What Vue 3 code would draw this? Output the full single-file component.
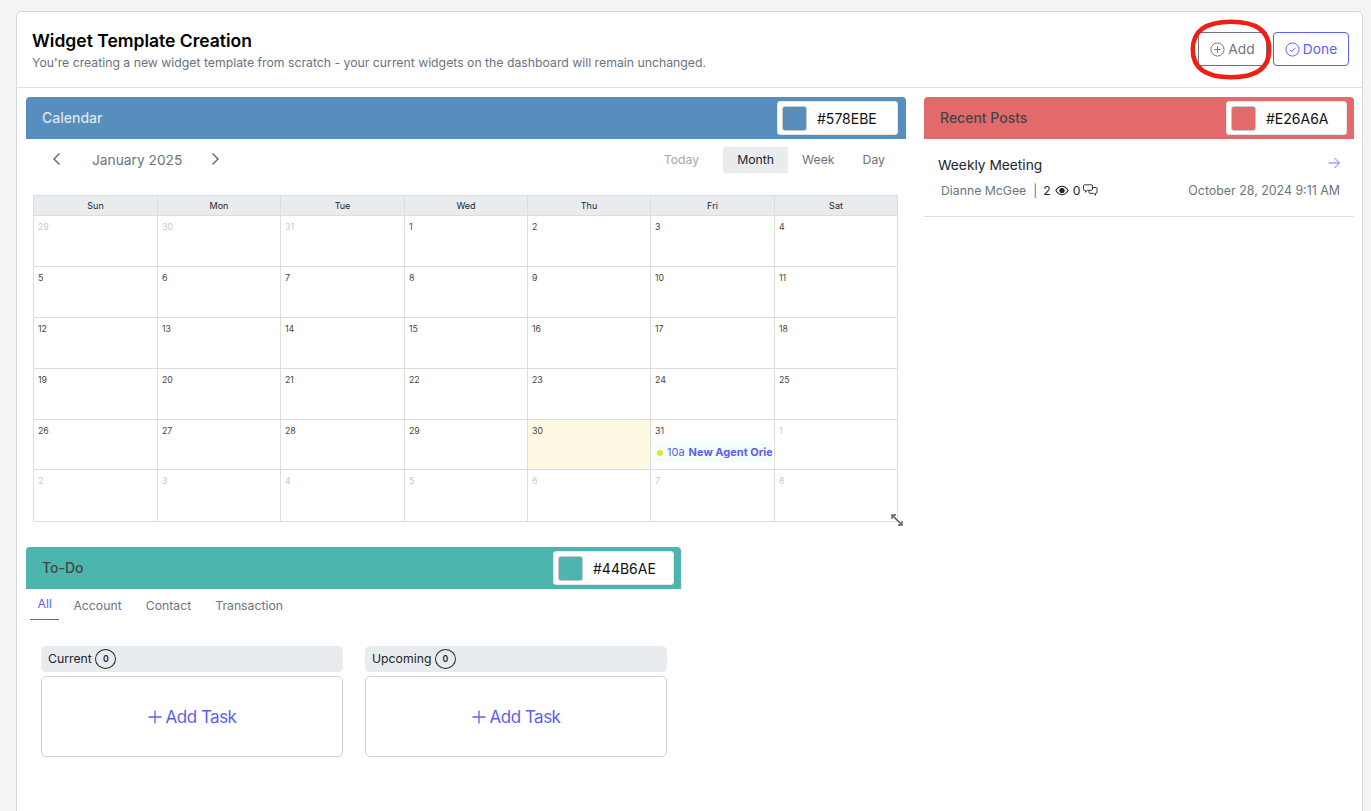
<template>
  <div class="page">
    <div class="card">
      <!-- top bar -->
      <header class="topbar">
        <div class="topbar-text">
          <h1>Widget Template Creation</h1>
          <p>You're creating a new widget template from scratch - your current widgets on the dashboard will remain unchanged.</p>
        </div>
        <div class="topbar-actions">
          <button class="btn btn-add">
            <svg width="15" height="15" viewBox="0 0 16 16" fill="none" stroke="currentColor" stroke-width="1">
              <circle cx="8" cy="8" r="7" />
              <path d="M8 4.5v7M4.5 8h7" />
            </svg>
            Add
          </button>
          <button class="btn btn-done">
            <svg width="15" height="15" viewBox="0 0 16 16" fill="none" stroke="currentColor" stroke-width="1">
              <circle cx="8" cy="8" r="7" />
              <path d="M5 8.3l2.2 2.2L11.2 6" />
            </svg>
            Done
          </button>
          <svg class="scribble" width="88" height="66" viewBox="0 0 88 66" fill="none">
            <path
              d="M82.250 32.500C82.250 50.800 69.200 60.250 44 60.250C18.800 60.250 5.750 50.800 5.750 32.500C5.750 14.200 18.800 4.750 44 4.750C69.200 4.750 82.250 14.200 82.250 32.500Z"
              stroke="#ee1f14"
              stroke-width="4.500"
            />
          </svg>
        </div>
      </header>

      <div class="board">
        <div class="col-left">
          <!-- calendar -->
          <section class="widget widget-calendar">
            <div class="widget-head head-blue">
              <span class="widget-title light">Calendar</span>
              <div class="color-box">
                <span class="swatch swatch-blue"></span>
                <span class="hex">#578EBE</span>
              </div>
            </div>
            <div class="cal-toolbar">
              <div class="cal-nav">
                <svg class="chev" width="10" height="14" viewBox="0 0 10 14" fill="none" stroke="currentColor" stroke-width="1.4">
                  <path d="M7.5 1.5L2 7l5.5 5.5" />
                </svg>
                <span class="cal-month">January 2025</span>
                <svg class="chev" width="10" height="14" viewBox="0 0 10 14" fill="none" stroke="currentColor" stroke-width="1.4">
                  <path d="M2.5 1.5L8 7l-5.5 5.5" />
                </svg>
              </div>
              <div class="cal-views">
                <span class="view view-today">Today</span>
                <span class="view view-active">Month</span>
                <span class="view">Week</span>
                <span class="view">Day</span>
              </div>
            </div>
            <div class="cal-grid">
              <div v-for="d in weekdays" :key="d" class="cal-dow">{{ d }}</div>
              <div
                v-for="(c, i) in cells"
                :key="i"
                :class="['cal-cell', { muted: c.muted, today: c.today }]"
              >
                <span class="cal-num">{{ c.n }}</span>
                <div v-if="c.event" class="cal-event">
                  <span class="dot"></span>
                  <span class="ev-time">10a</span>
                  <b class="ev-name">New Agent Orientation</b>
                </div>
              </div>
            </div>
            <svg class="resize" width="12" height="12" viewBox="0 0 12 12" fill="none" stroke="#555" stroke-width="1.4">
              <path d="M2 2l8 8" />
              <path d="M1 5V1h4M11 7v4H7" />
            </svg>
          </section>

          <!-- to-do -->
          <section class="widget widget-todo">
            <div class="widget-head head-green">
              <span class="widget-title">To-Do</span>
              <div class="color-box">
                <span class="swatch swatch-green"></span>
                <span class="hex">#44B6AE</span>
              </div>
            </div>
            <nav class="tabs">
              <span v-for="(t, i) in tabs" :key="t" :class="['tab', { active: i === 0 }]">{{ t }}</span>
            </nav>
            <div class="task-cols">
              <div v-for="col in taskCols" :key="col" class="task-col">
                <div class="task-head">
                  {{ col }}
                  <span class="count">0</span>
                </div>
                <div class="task-box">
                  <svg width="14" height="14" viewBox="0 0 14 14" fill="none" stroke="currentColor" stroke-width="1.3">
                    <path d="M7 0.500v13M0.500 7h13" />
                  </svg>
                  Add Task
                </div>
              </div>
            </div>
          </section>
        </div>

        <!-- recent posts -->
        <section class="widget widget-posts">
          <div class="widget-head head-red">
            <span class="widget-title">Recent Posts</span>
            <div class="color-box">
              <span class="swatch swatch-red"></span>
              <span class="hex">#E26A6A</span>
            </div>
          </div>
          <div class="post">
            <div class="post-top">
              <span class="post-title">Weekly Meeting</span>
              <svg width="12" height="12" viewBox="0 0 12 12" fill="none" stroke="#6c63f0" stroke-width="0.9">
                <path d="M0.500 6h10.500M6.500 1l5 5-5 5" />
              </svg>
            </div>
            <div class="post-meta">
              <span class="post-author">Dianne McGee</span>
              <span class="post-sep">|</span>
              <span class="post-stat">2</span>
              <svg class="eye" width="14" height="11" viewBox="0 0 16 12" fill="none" stroke="#222" stroke-width="1.2">
                <path d="M1 6c2-3.200 4.300-4.800 7-4.800S13 2.800 15 6c-2 3.200-4.300 4.800-7 4.800S3 9.200 1 6z" />
                <circle cx="8" cy="6" r="2.400" fill="#222" />
              </svg>
              <span class="post-stat">0</span>
              <svg class="chat" width="15" height="13" viewBox="0 0 15 13" fill="none" stroke="#222" stroke-width="0.9">
                <path d="M1.500 0.800h7a1 1 0 0 1 1 1v3.500a1 1 0 0 1-1 1H4.500L2.500 8.200V6.300h-1a1 1 0 0 1-1-1V1.800a1 1 0 0 1 1-1z" />
                <path d="M9.500 3.500h3.500a1 1 0 0 1 1 1v3.800a1 1 0 0 1-1 1h-0.500v1.900l-2-1.900H7a1 1 0 0 1-1-1V6.500" />
              </svg>
              <span class="post-date">October 28, 2024 9:11 AM</span>
            </div>
          </div>
        </section>
      </div>
    </div>
  </div>
</template>

<script setup>
const weekdays = ["Sun", "Mon", "Tue", "Wed", "Thu", "Fri", "Sat"];
const tabs = ["All", "Account", "Contact", "Transaction"];
const taskCols = ["Current", "Upcoming"];

// 6 weeks, 29 Dec 2024 to 8 Feb 2025
const cells = [];
for (const n of [29, 30, 31]) cells.push({ n, muted: true });
for (let n = 1; n <= 31; n++) {
  cells.push({ n, today: n === 30, event: n === 31 });
}
for (let n = 1; n <= 8; n++) cells.push({ n, muted: true });
</script>

<style>
html,
body {
  margin: 0;
  background: #f3f4f6;
}
</style>

<style scoped>
.page {
  height: 811px;
  padding: 11px 8px 0 16px;
  box-sizing: border-box;
  overflow: hidden;
  font-family: Inter, "Liberation Sans", sans-serif;
  color: #212529;
}

.card {
  height: 830px;
  box-sizing: border-box;
  background: #fff;
  border: 1px solid #d8d9db;
  border-radius: 5px;
}

/* top bar */
.topbar {
  display: flex;
  justify-content: space-between;
  height: 76px;
  box-sizing: border-box;
  padding: 20px 13px 0 15px;
  border-bottom: 1px solid #dee0e2;
}

.topbar-text h1 {
  margin: -1px 0 0;
  font-size: 17.5px;
  line-height: 19px;
  font-weight: 600;
  color: #000;
}

.topbar-text p {
  margin: 5px 0 0;
  font-size: 12.25px;
  line-height: 15px;
  color: #6b7280;
}

.topbar-actions {
  position: relative;
  display: flex;
  gap: 6px;
  height: 34px;
}

.btn {
  display: flex;
  align-items: center;
  justify-content: center;
  gap: 3px;
  height: 34px;
  padding: 0;
  box-sizing: border-box;
  background: #fff;
  border-radius: 4px;
  font-family: inherit;
  font-size: 13.75px;
}

.btn-add {
  width: 69px;
  border: 1px solid #6c757d;
  color: #6c757d;
  border-radius: 0;
}

.btn-done {
  width: 76px;
  border: 1px solid #5d5fef;
  color: #5d5fef;
}

.scribble {
  position: absolute;
  left: -11px;
  top: -15px;
  pointer-events: none;
}

/* board */
.board {
  display: flex;
  gap: 18px;
  padding: 9px 0 0 9px;
}

.col-left {
  width: 880px;
  flex: none;
}

.widget-head {
  display: flex;
  align-items: center;
  justify-content: space-between;
  height: 42px;
  box-sizing: border-box;
  padding: 0 7px 0 16px;
  border-radius: 4px 4px 0 0;
}

.head-blue {
  padding-right: 8px;
}

.head-blue,
.swatch-blue {
  background: #578ebe;
}

.head-green,
.swatch-green {
  background: #4cb5ad;
}

.head-red,
.swatch-red {
  background: #e26a6a;
}

.widget-title {
  margin-top: -2px;
  font-size: 14px;
  font-weight: 500;
  color: #454545;
}

.widget-title.light {
  color: #dfe4e8;
}

.color-box {
  display: flex;
  align-items: center;
  width: 121px;
  height: 34px;
  box-sizing: border-box;
  padding: 3px 4px;
  background: #fff;
  border-radius: 3px;
  border: 1px solid #e6e6e6;
}

.swatch {
  width: 25px;
  height: 25px;
  box-sizing: border-box;
  border: 1px solid #c5c9cc;
  border-radius: 3px;
}

.hex {
  margin-left: 10px;
  font-size: 14px;
  color: #111;
}

/* calendar */
.widget-calendar {
  position: relative;
  height: 450px;
}

.cal-toolbar {
  display: flex;
  justify-content: space-between;
  height: 48px;
  padding: 8px 14px 0 26px;
}

.cal-nav {
  display: flex;
  align-items: center;
  height: 26px;
  color: #6c757d;
}

.chev {
  margin-top: -2px;
  color: #5f676e;
}

.cal-month {
  margin: 0 28px 0 30px;
  font-size: 13.75px;
}

.cal-views {
  display: flex;
  height: 26px;
  margin-right: -7px;
  font-size: 12.25px;
  line-height: 25px;
  color: #6c757d;
}

.view {
  padding: 0 14px;
}

.view-today {
  margin-right: 8px;
  color: #a4a9ae;
  padding: 0 16px;
}

.view-active {
  background: #e9ecef;
  color: #212529;
  border-radius: 4px 0 0 4px;
}

.cal-grid {
  display: grid;
  grid-template-columns: 124px 123px 124px 123px 123px 124px 122px;
  width: 865px;
  margin-left: 7px;
  box-sizing: border-box;
  border: 1px solid #ddd;
}

.cal-dow {
  height: 20px;
  box-sizing: border-box;
  background: #e9ecef;
  border-right: 1px solid #ddd;
  border-bottom: 1px solid #ddd;
  text-align: center;
  font-size: 9px;
  line-height: 20px;
  color: #212529;
}

.cal-cell {
  height: 50.9px;
  box-sizing: border-box;
  padding: 6px 5px 0 4px;
  border-right: 1px solid #ddd;
  border-bottom: 1px solid #ddd;
  font-size: 8.75px;
  line-height: 11px;
  color: #444;
  overflow: hidden;
}

.cal-dow:nth-child(7),
.cal-cell:nth-child(7n) {
  border-right: none;
}

.cal-cell:nth-last-child(-n + 7) {
  border-bottom: none;
}

.cal-cell.muted {
  color: #c8c8c8;
}

.cal-cell.today {
  background: #fef9e3;
}

.cal-event {
  display: flex;
  align-items: center;
  gap: 4px;
  height: 20px;
  margin: 6px -3px 0 -2px;
  padding-left: 4px;
  background: #f3fdfb;
  white-space: nowrap;
  overflow: hidden;
  font-size: 11px;
  color: #5d5fef;
}

.dot {
  flex: none;
  width: 6px;
  height: 6px;
  border-radius: 50%;
  background: #e8e32a;
}

.ev-name {
  font-weight: 700;
}

.resize {
  position: absolute;
  left: 865px;
  top: 417px;
}

/* to-do */
.widget-todo {
  width: 655px;
}

.tabs {
  display: flex;
  height: 31px;
  padding-left: 4px;
  font-size: 12.25px;
  line-height: 33px;
  color: #6c757d;
}

.tab {
  padding: 0 7px;
  margin-right: 10px;
}

.tab.active {
  padding: 0 7.5px;
  color: #5d5fef;
  border-bottom: 1px solid #5d5fef;
  margin-right: 7px;
  line-height: 30px;
}

.task-cols {
  display: flex;
  gap: 22px;
  padding: 26px 14px 0 15px;
}

.task-col {
  flex: 1;
}

.task-head {
  display: flex;
  align-items: center;
  gap: 3.5px;
  height: 26px;
  box-sizing: border-box;
  padding: 0 0 1px 7px;
  background: #e9ecef;
  border-radius: 5px;
  font-size: 12.25px;
  color: #212529;
}

.count {
  width: 21px;
  height: 20px;
  box-sizing: border-box;
  border: 1px solid #212529;
  border-radius: 50%;
  text-align: center;
  font-size: 8.75px;
  font-weight: 600;
  line-height: 19px;
}

.task-box {
  display: flex;
  align-items: center;
  justify-content: center;
  gap: 4px;
  height: 81px;
  margin-top: 4px;
  box-sizing: border-box;
  border: 1px solid #d0d0d0;
  border-radius: 5px;
  font-size: 17px;
  letter-spacing: -0.5px;
  color: #5d5fef;
}

/* recent posts */
.widget-posts {
  width: 430px;
  flex: none;
}

.post {
  height: 78px;
  box-sizing: border-box;
  padding: 18px 14px 0 14px;
  border-bottom: 1px solid #dee0e6;
}

.post-top {
  display: flex;
  justify-content: space-between;
  align-items: flex-start;
}

.post-title {
  font-size: 13.75px;
  line-height: 17px;
  color: #212529;
}

.post-meta {
  display: flex;
  align-items: center;
  height: 16px;
  margin-top: 8px;
  padding-left: 3px;
  font-size: 12.25px;
  color: #6c757d;
}

.post-sep {
  margin: 0 6px 0 7px;
}

.post-stat {
  color: #212529;
}

.post-meta .eye {
  margin: 0 4px;
}

.post-meta .chat {
  margin-left: 2px;
}

.post-date {
  margin-left: auto;
  font-size: 12.4px;
}
</style>
